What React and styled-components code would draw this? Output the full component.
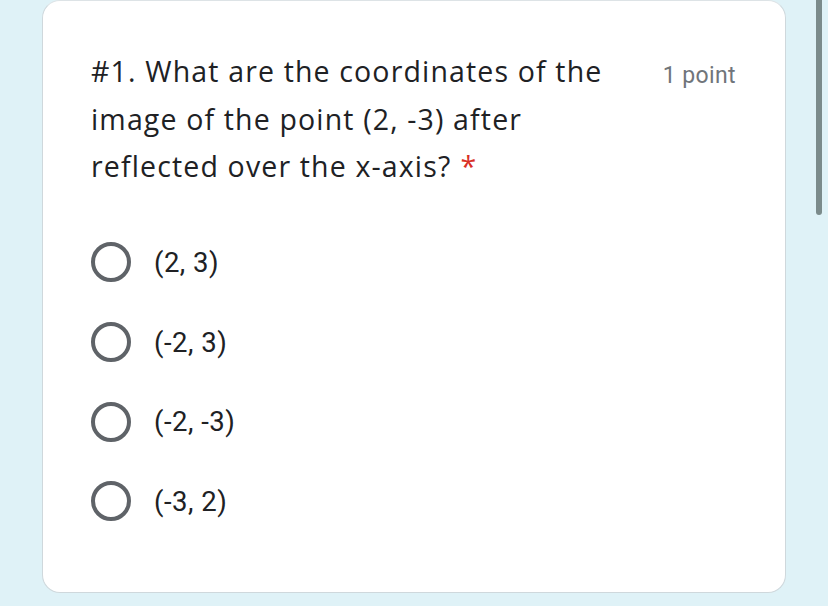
import React from "react";
import styled, { createGlobalStyle } from "styled-components";

const GlobalStyle = createGlobalStyle`
  html, body {
    margin: 0;
    padding: 0;
    background: #dff2f7;
    font-family: Roboto, "Liberation Sans", Arial, sans-serif;
  }
`;

// styled
const Page = styled.div`
  position: relative;
  width: 828px;
  height: 606px;
  overflow: hidden;
  background: #dff2f7;
`;

const Card = styled.div`
  margin-left: 42px;
  width: 744px;
  height: 593px;
  background: #fff;
  border: 1px solid #cfd8dc;
  border-top-color: #dde3e6;
  border-radius: 18px;
  padding: 47px 48px 0 48px;
  box-sizing: border-box;
`;

const Header = styled.div`
  display: flex;
  align-items: flex-start;
  justify-content: space-between;
`;

const Title = styled.div`
  font-family: "Open Sans", Roboto, sans-serif;
  font-size: 28.5px;
  letter-spacing: 1.15px;
  line-height: 47.5px;
  color: #202124;
  white-space: nowrap;
`;

const Required = styled.span`
  color: #d93025;
  margin-left: 9px;
`;

const Points = styled.div`
  font-size: 23px;
  letter-spacing: 0.4px;
  line-height: 56px;
  color: #70757a;
  margin-right: 1px;
`;

const Options = styled.div`
  display: flex;
  flex-direction: column;
  margin-top: 32px;
`;

const Option = styled.label`
  display: flex;
  align-items: center;
  height: 79.7px;
  gap: 23px;
`;

const Radio = styled.span`
  width: 32px;
  height: 32px;
  border: 4px solid #5f6368;
  border-radius: 50%;
  flex-shrink: 0;
`;

const OptionText = styled.span`
  font-size: 27.5px;
  letter-spacing: 0.5px;
  color: #202124;
`;

const Scrollbar = styled.div`
  position: absolute;
  top: -6px;
  left: 816px;
  width: 6px;
  height: 221px;
  border-radius: 3px;
  background: #7b8b8b;
`;

const options = ["(2, 3)", "(-2, 3)", "(-2, -3)", "(-3, 2)"];

const App = () => {
  return (
    <>
      <GlobalStyle />
      <Page>
        <Card>
          <Header>
            <Title>
              #1. What are the coordinates of the
              <br />
              image of the point (2, -3) after
              <br />
              reflected over the x-axis?
              <Required>*</Required>
            </Title>
            <Points>1 point</Points>
          </Header>
          <Options>
            {options.map((o) => (
              <Option key={o}>
                <Radio />
                <OptionText>{o}</OptionText>
              </Option>
            ))}
          </Options>
        </Card>
        <Scrollbar />
      </Page>
    </>
  );
};

export default App;
